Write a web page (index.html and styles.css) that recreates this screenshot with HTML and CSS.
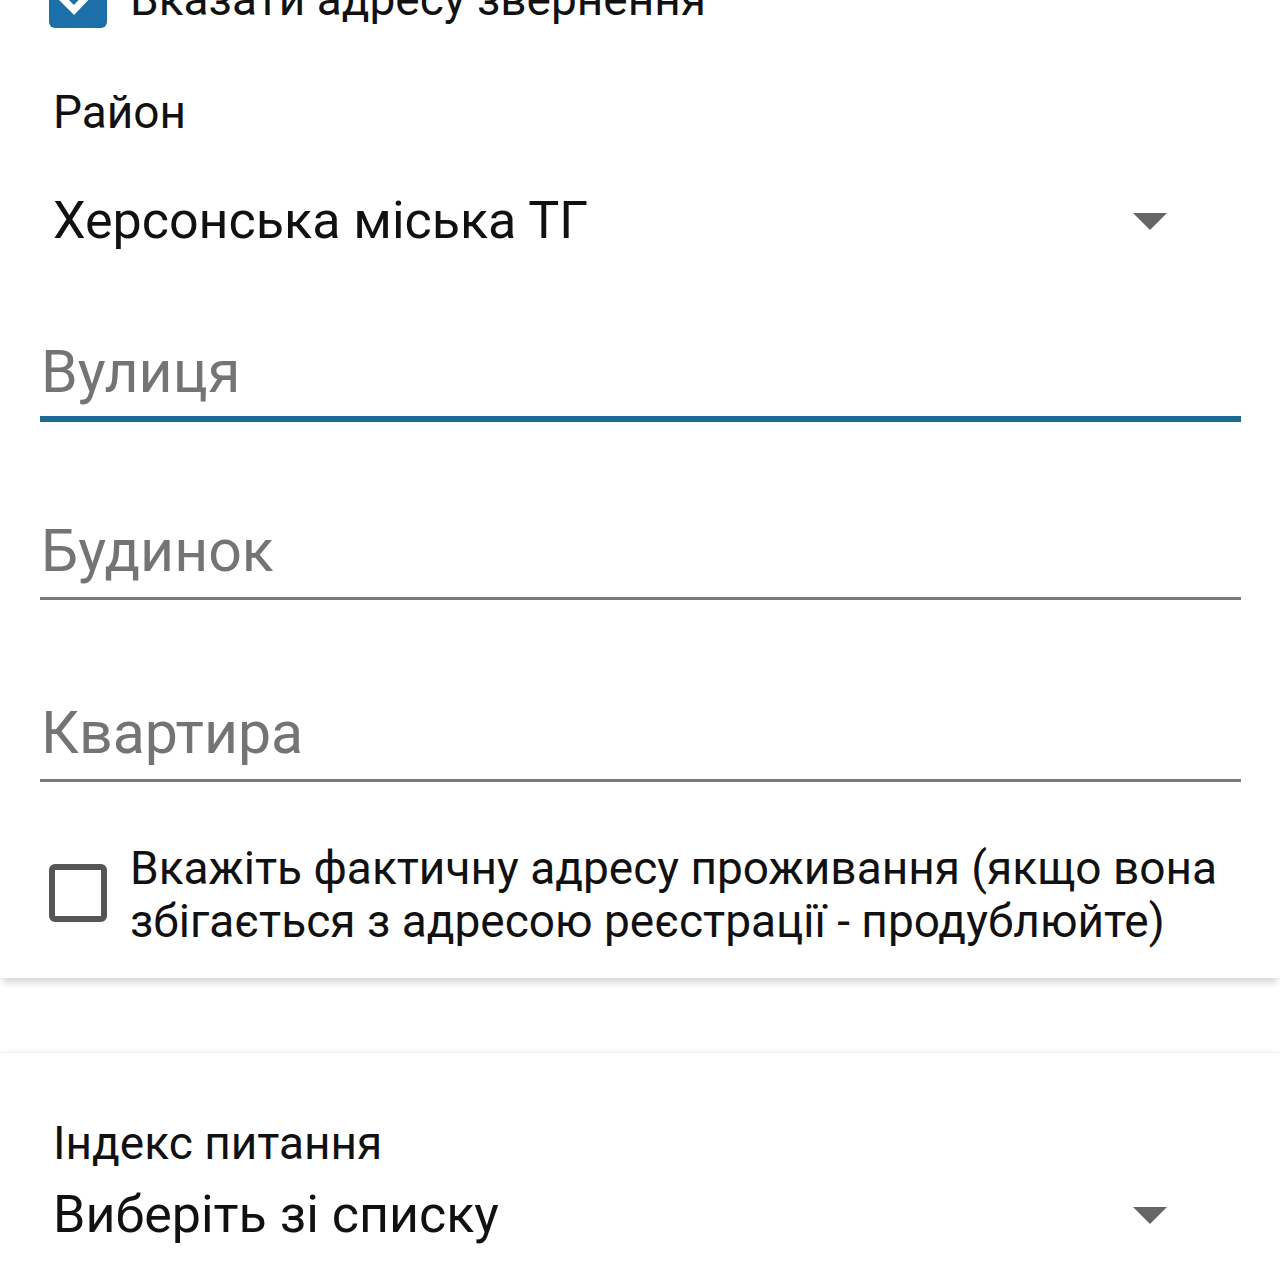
FILE: index.html
```html
<!DOCTYPE html>
<html lang="uk">
<head>
<meta charset="utf-8">
<title>Адреса</title>
<link rel="stylesheet" href="styles.css">
</head>
<body>
<div class="card card-top">
  <div class="check-row check-row-top">
    <span class="box box-checked">
      <svg viewBox="0 0 58 58" width="58" height="58"><path d="M14 29 L25 40 L45 19" fill="none" stroke="#fff" stroke-width="7" stroke-linecap="square"/></svg>
    </span>
    <span class="check-label">Вказати адресу звернення</span>
  </div>

  <div class="spinner-label label-rayon">Район</div>
  <div class="spinner-row spinner-rayon">
    <span class="spinner-value">Херсонська міська ТГ</span>
    <span class="caret"></span>
  </div>

  <div class="field field-focused field-street"><span class="placeholder">Вулиця</span></div>
  <div class="field field-house"><span class="placeholder">Будинок</span></div>
  <div class="field field-flat"><span class="placeholder">Квартира</span></div>

  <div class="check-row check-row-actual">
    <span class="box box-empty"></span>
    <span class="check-label check-label-multi">Вкажіть фактичну адресу проживання (якщо вона збігається з адресою реєстрації - продублюйте)</span>
  </div>
</div>

<div class="gap"></div>

<div class="card card-bottom">
  <div class="spinner-label label-index">Індекс питання</div>
  <div class="spinner-row spinner-index">
    <span class="spinner-value">Виберіть зі списку</span>
    <span class="caret"></span>
  </div>
</div>
</body>
</html>
```

FILE: styles.css
```css
html, body {
  margin: 0;
  padding: 0;
  background: #ffffff;
  overflow: hidden;
}

body {
  font-family: Roboto, "Noto Sans", sans-serif;
  color: #141414;
  width: 1280px;
  height: 1280px;
}

.card {
  background: #ffffff;
  padding: 0 39px 0 40px;
}

.card-top {
  padding-bottom: 30px;
  box-shadow: 0 6px 8px -2px rgba(0, 0, 0, 0.18);
  position: relative;
  z-index: 1;
}

.check-row {
  display: flex;
  align-items: flex-start;
  gap: 23px;
  padding-left: 9px;
}

.check-row-top {
  margin-top: -30px;
  height: 58px;
  align-items: center;
}

.box {
  flex: 0 0 auto;
  width: 58px;
  height: 58px;
  box-sizing: border-box;
  border-radius: 6px;
  display: flex;
  align-items: center;
  justify-content: center;
}

.box-checked {
  background: #1c70a9;
}

.box-empty {
  border: 6px solid #555555;
  margin-top: 22px;
}

.check-label {
  font-size: 46px;
  line-height: 54px;
  color: #111;
}

.check-label-multi {
  font-size: 46px;
  line-height: 53px;
}

.spinner-label {
  font-size: 46px;
  line-height: 52px;
  padding-left: 13px;
  color: #111;
}

.label-rayon {
  margin-top: 58px;
}

.spinner-row {
  display: flex;
  align-items: center;
  justify-content: space-between;
  padding-left: 13px;
  padding-right: 74px;
}

.spinner-rayon {
  margin-top: 51px;
  height: 64px;
}

.spinner-value {
  font-size: 52px;
  line-height: 64px;
  color: #111;
}

.caret {
  width: 0;
  height: 0;
  border-left: 17px solid transparent;
  border-right: 17px solid transparent;
  border-top: 17px solid #666666;
}

.field {
  height: 80px;
  border-bottom: 3px solid #7a7a7a;
  display: flex;
  align-items: flex-end;
  padding-left: 1px;
  padding-bottom: 14px;
  box-sizing: content-box;
}

.field-focused {
  border-bottom: 6px solid #1b6a93;
  padding-bottom: 12px;
}

.field-street {
  margin-top: 71px;
}

.field-house {
  margin-top: 81px;
}

.field-flat {
  margin-top: 85px;
}

.placeholder {
  font-size: 59px;
  line-height: 64px;
  color: #747474;
}

.check-row-actual {
  margin-top: 60px;
}

.gap {
  height: 74px;
}

.card-bottom {
  border-top: 1px solid #f1f1f1;
  box-shadow: 0 -3px 6px -3px rgba(0, 0, 0, 0.06);
}

.label-index {
  padding-top: 64px;
  font-size: 46px;
  line-height: 52px;
}

.spinner-index {
  margin-top: 14px;
}
```
